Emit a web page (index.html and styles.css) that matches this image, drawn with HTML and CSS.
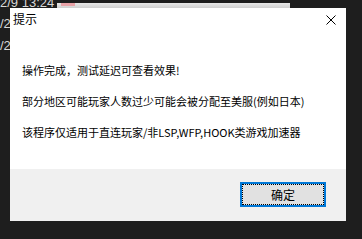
FILE: index.html
```html
<!DOCTYPE html>
<html>
<head>
<meta charset="utf-8">
<link rel="stylesheet" href="styles.css">
</head>
<body>
<div class="desktop">
  <div class="bg-lines">
    <div class="bg-line first">2/9 13:24</div>
    <div class="bg-line">/2</div>
    <div class="bg-line">/2,</div>
  </div>
  <div class="topbar"><span class="topbar-red"></span></div>
  <div class="dialog">
    <div class="titlebar">
      <span class="title">提示</span>
      <svg class="close" width="10" height="10" viewBox="0 0 10 10">
        <path d="M0.5 0.5 L9.5 9.5 M9.5 0.5 L0.5 9.5" stroke="#000" stroke-width="1" fill="none"/>
      </svg>
    </div>
    <div class="content">
      <p class="msg">操作完成，测试延迟可查看效果!</p>
      <p class="msg">部分地区可能玩家人数过少可能会被分配至美服(例如日本)</p>
      <p class="msg">该程序仅适用于直连玩家/非LSP,WFP,HOOK类游戏加速器</p>
    </div>
    <div class="footer">
      <button class="btn"><span class="focus">确定</span></button>
    </div>
  </div>
</div>
</body>
</html>
```

FILE: styles.css
```css
html, body {
  margin: 0;
  padding: 0;
}
body {
  width: 362px;
  height: 239px;
  overflow: hidden;
  background: #1e1e1e;
  font-family: "Noto Sans CJK SC", "Noto Sans", sans-serif;
}
.desktop {
  position: relative;
  width: 362px;
  height: 239px;
  overflow: hidden;
  background: #1e1e1e;
}
.bg-lines {
  display: flex;
  flex-direction: column;
  margin-top: -6px;
  color: #d8d8d8;
  font-family: "Liberation Sans", sans-serif;
  font-size: 13px;
}
.bg-line {
  height: 22px;
  line-height: 16px;
  white-space: nowrap;
}
.bg-line.first {
  height: 21px;
  margin-top: 1px;
}
.topbar {
  position: absolute;
  left: 57px;
  top: 3px;
  width: 233px;
  height: 5px;
  background: linear-gradient(#e8e8e8, #d0d0d0);
}
.topbar-red {
  display: block;
  margin-left: 4px;
  width: 14px;
  height: 3px;
  background: #e9a3a8;
}
.dialog {
  position: absolute;
  left: 10px;
  top: 8px;
  width: 336px;
  height: 213px;
  display: flex;
  flex-direction: column;
  background: #fff;
  color: #000;
}
.titlebar {
  height: 30px;
  display: flex;
  justify-content: space-between;
  align-items: flex-start;
}
.title {
  margin-left: 3px;
  font-size: 12px;
  line-height: 22px;
}
.close {
  margin-top: 7px;
  margin-right: 10px;
}
.content {
  flex: 1;
  padding: 17px 0 0 12px;
}
.msg {
  margin: 0;
  font-size: 11px;
  line-height: 31px;
  white-space: nowrap;
}
.footer {
  height: 52px;
  background: #f0f0f0;
  display: flex;
  justify-content: flex-end;
  align-items: flex-start;
}
.btn {
  margin: 13px 20px 0 0;
  width: 86px;
  height: 25px;
  padding: 0;
  border: 2px solid #0078d7;
  background: #e1e1e1;
  font-family: inherit;
  font-size: 12px;
  color: #000;
  display: flex;
}
.focus {
  flex: 1;
  border: 1px dotted #000;
  display: flex;
  align-items: center;
  justify-content: center;
  line-height: 1;
}
```
